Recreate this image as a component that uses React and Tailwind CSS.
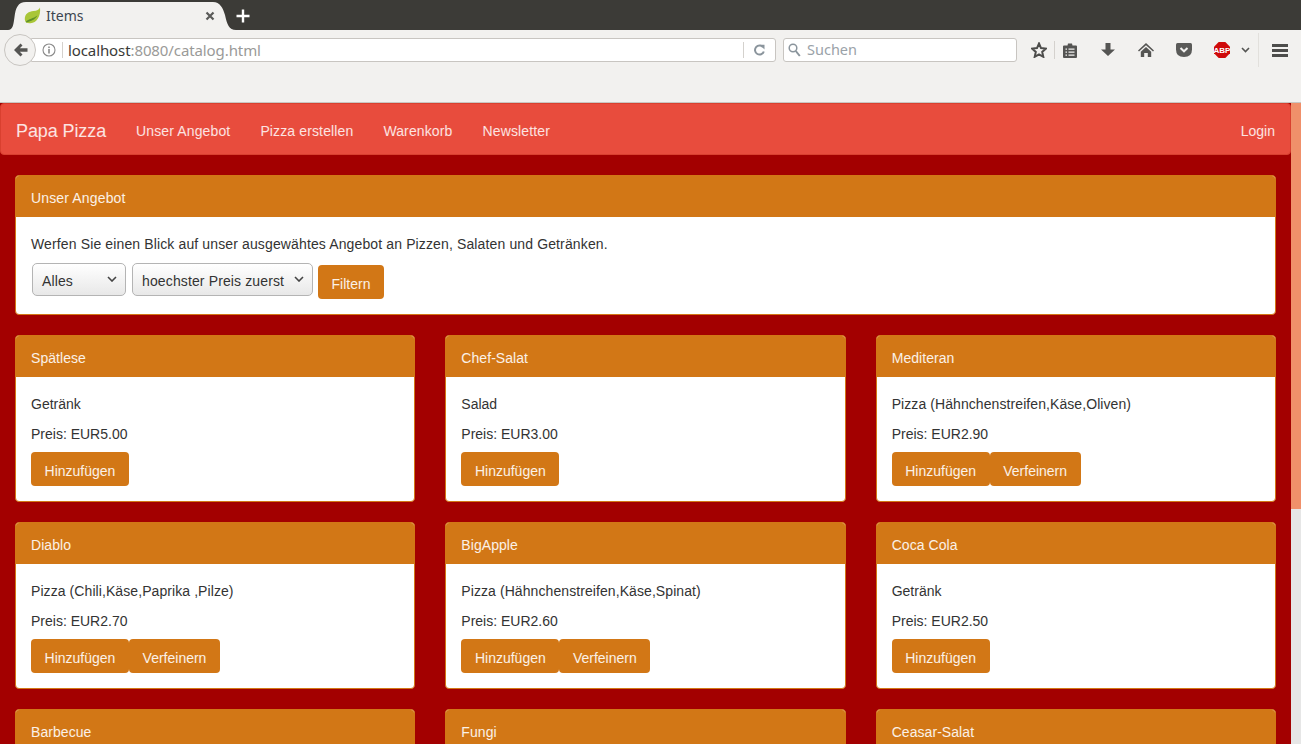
const items = [
  { name: "Spätlese", desc: "Getränk", price: "5.00" },
  { name: "Chef-Salat", desc: "Salad", price: "3.00" },
  { name: "Mediteran", desc: "Pizza (Hähnchenstreifen,Käse,Oliven)", price: "2.90", refine: true },
  { name: "Diablo", desc: "Pizza (Chili,Käse,Paprika ,Pilze)", price: "2.70", refine: true },
  { name: "BigApple", desc: "Pizza (Hähnchenstreifen,Käse,Spinat)", price: "2.60", refine: true },
  { name: "Coca Cola", desc: "Getränk", price: "2.50" },
  { name: "Barbecue", desc: "Pizza", price: "2.40", refine: true },
  { name: "Fungi", desc: "Pizza", price: "2.30", refine: true },
  { name: "Ceasar-Salat", desc: "Salad", price: "2.20" },
];

function Btn({ children, className = "" }) {
  return (
    <div className={"h-[34px] px-[13px] pt-[4px] flex items-center rounded-[4px] bg-[#d27716] text-[14px] text-white/90 " + className}>
      {children}
    </div>
  );
}

function Heading({ children, className = "" }) {
  return (
    <div className={"h-[41px] px-[15px] pt-[4px] flex items-center bg-[#d27716] text-white/90 rounded-t-[3px] " + className}>
      {children}
    </div>
  );
}

function Card({ item }) {
  return (
    <div className="h-[167px] bg-white border border-[#d27716] rounded-[4px] flex flex-col">
      <Heading className="tracking-[0.06px]">{item.name}</Heading>
      <div className="p-[15px] pr-[14px] flex flex-col">
        <div className={"h-[20px] leading-[24px] mb-[10px] " + (item.refine ? "tracking-[0.08px]" : "")}>{item.desc}</div>
        <div className="h-[20px] leading-[24px] mb-[10px]">Preis: EUR{item.price}</div>
        <div className="flex">
          <Btn className="w-[98px] justify-center">Hinzufügen</Btn>
          {item.refine && <Btn className="w-[91px] justify-center">Verfeinern</Btn>}
        </div>
      </div>
    </div>
  );
}

function Select({ label, className = "" }) {
  return (
    <div
      className={"h-[33px] rounded-[5px] border border-[#b4b4b4] bg-gradient-to-b from-white to-[#e8e8e8] flex items-center justify-between pl-[9px] pr-[8px] text-[#333] " + className}
    >
      <span className="pt-[4px] tracking-[0.13px]">{label}</span>
      <svg width="10" height="6" viewBox="0 0 10 6" className="-mt-[1px]">
        <path d="M1 1l4 4 4-4" fill="none" stroke="#444" strokeWidth="1.600" />
      </svg>
    </div>
  );
}

function Leaf() {
  return (
    <svg width="17" height="17" viewBox="0 0 17 17" className="shrink-0">
      <path d="M16 0.500C15 3 13 3.600 9.500 4C5 4.500 0.500 6.500 0.800 12.500C1 15.500 3.500 16.600 6.500 16.300C12.500 15.800 17 9.500 16 0.500Z" fill="#a9c638" />
      <path d="M1.600 15C5 11.500 9 11.800 13.500 8.500C11 13 6 14.300 2.500 15.600Z" fill="#5f9028" />
    </svg>
  );
}

function TabBar() {
  return (
    <div className="h-[30px] bg-[#3c3b37] flex items-start shrink-0">
      <div className="relative w-[228px] h-[30px] ml-[8px] flex items-center pl-[16px] pr-[19px] pt-[1px]">
        <svg width="228" height="30" viewBox="0 0 228 30" className="absolute left-0 top-0">
          <path d="M0 30C5 30 5.500 24 6.500 17C7.500 8 10 2 18 2L205 2C212 2 215 8 217 15C219 24 221 30 228 30Z" fill="#f2f1ef" />
        </svg>
        <div className="relative flex items-center w-full">
          <Leaf />
          <span className="ml-[5px] text-[14px] text-[#3c4650] font-['Noto_Sans',sans-serif] flex-1">Items</span>
          <svg width="10" height="10" viewBox="0 0 10 10" className="mr-[2px]">
            <path d="M1.500 1.500l7 7M8.500 1.500l-7 7" stroke="#5a5a58" strokeWidth="2.200" />
          </svg>
        </div>
      </div>
      <svg width="14" height="14" viewBox="0 0 14 14" className="mt-[9px]">
        <path d="M7 0.500v13M0.500 7h13" stroke="#fff" strokeWidth="2.400" />
      </svg>
    </div>
  );
}

function Sep({ className = "" }) {
  return <div className={"w-px shrink-0 bg-[#d4d1cd] " + className} />;
}

function Icon({ children, w = 16, h = 16, className = "" }) {
  return (
    <svg width={w} height={h} viewBox={`0 0 ${w} ${h}`} className={"shrink-0 " + className}>
      {children}
    </svg>
  );
}

function Toolbar() {
  return (
    <div className="h-[73px] bg-[#f2f1ef] border-b border-[#c9c6c2] shrink-0 text-[14.5px] font-['Noto_Sans',sans-serif]">
      <div className="h-[40px] flex items-center pl-[4px]">
        <div className="relative z-10 w-[32px] h-[32px] shrink-0 rounded-full border border-[#c8c5c1] bg-[#f2f1ef] flex items-center justify-center">
          <Icon w={15} h={14}>
            <path d="M7.500 0.500L1 7l6.500 6.500 2-2L6.800 8.700H14.500V5.300H6.800L9.500 2.500Z" fill="#555553" />
          </Icon>
        </div>
        <div className="-ml-[5px] w-[745px] h-[24px] shrink-0 bg-white border border-[#c8c5c1] rounded-r-[3px] flex items-center pl-[10px]">
          <Icon w={14} h={14}>
            <circle cx="7" cy="7" r="6" fill="none" stroke="#8a8a8a" strokeWidth="1.100" />
            <rect x="6.200" y="6" width="1.600" height="4.500" fill="#8a8a8a" />
            <rect x="6.200" y="3.500" width="1.600" height="1.600" fill="#8a8a8a" />
          </Icon>
          <Sep className="h-[16px] ml-[6px]" />
          <span className="ml-[5px] w-[675px] whitespace-nowrap text-[15px] tracking-[-0.1px]">
            <span className="text-[#3a3a38]">localhost</span>
            <span className="text-[#9a9a98]">:8080/catalog.html</span>
          </span>
          <Sep className="h-[16px]" />
          <Icon w={12} h={12} className="ml-[9px]">
            <path d="M10 3.200A4.500 4.500 0 1 0 10.800 7.500" fill="none" stroke="#8a949c" strokeWidth="2" />
            <path d="M6.800 0.800H11.500V5.500Z" fill="#8a949c" />
          </Icon>
        </div>
        <div className="ml-[7px] w-[234px] h-[24px] shrink-0 bg-white border border-[#c8c5c1] rounded-[3px] flex items-center pl-[4px]">
          <Icon w={13} h={14}>
            <circle cx="5" cy="5" r="3.800" fill="none" stroke="#8a949c" strokeWidth="1.500" />
            <path d="M7.800 8l4 5" stroke="#8a949c" strokeWidth="2" />
          </Icon>
          <span className="ml-[6px] text-[#9aa2a8]">Suchen</span>
        </div>
        <Icon w={16} h={16} className="ml-[14px]">
          <path d="M8 1.500l2 4.600 5 .5-3.800 3.300 1.100 4.900L8 12.300l-4.300 2.500 1.100-4.900L1 6.600l5-.5Z" fill="none" stroke="#4d4d4b" strokeWidth="2" />
        </Icon>
        <Sep className="h-[18px] ml-[7px]" />
        <Icon w={14} h={15} className="ml-[8px]">
          <path d="M1 2.500H4.500L5 .5H9L9.500 2.500H13Q14 2.500 14 3.500V14Q14 15 13 15H1Q0 15 0 14V3.500Q0 2.500 1 2.500Z" fill="#555553" />
          <path d="M2.500 5.500h1.500v1.300H2.500zM5.500 5.500h6v1.300h-6zM2.500 8.500h1.500v1.300H2.500zM5.500 8.500h6v1.300h-6zM2.500 11.500h1.500v1.300H2.500zM5.500 11.500h6v1.300h-6z" fill="#f2f1ef" />
        </Icon>
        <Icon w={14} h={13} className="ml-[24px] -mt-[1px]">
          <path d="M4.500 0H9.500V6.500H14L7 13 0 6.500H4.500Z" fill="#555553" />
        </Icon>
        <Icon w={16} h={14} className="ml-[23px]">
          <path d="M8 0L0 7.500 1 8.600 8 2.300 15 8.600 16 7.500Z M8 4L2.800 8.800V14H6.200V10H9.800V14H13.200V8.800Z" fill="#555553" />
        </Icon>
        <Icon w={16} h={14} className="ml-[22px]">
          <path d="M1.500 0H14.500Q16 0 16 1.500V6.500Q16 14 8 14T0 6.500V1.500Q0 0 1.500 0Z" fill="#5a5a58" />
          <path d="M4.500 5l3.500 3.300L11.500 5" fill="none" stroke="#f2f1ef" strokeWidth="2" />
        </Icon>
        <svg width="16" height="16" viewBox="0 0 16 16" className="ml-[22px] shrink-0">
          <path d="M4.700 0H11.300L16 4.700V11.300L11.300 16H4.700L0 11.300V4.700Z" fill="#cf0a0a" />
          <text x="8" y="11" textAnchor="middle" fontSize="8" fontWeight="700" fill="#fff" fontFamily="Liberation Sans, sans-serif">ABP</text>
        </svg>
        <Icon w={9} h={6} className="ml-[11px]">
          <path d="M1 1l3.500 3.500L8 1" fill="none" stroke="#555553" strokeWidth="1.600" />
        </Icon>
        <Sep className="h-[34px] ml-[8px] bg-[#e2e0dc]" />
        <Icon w={16} h={13} className="ml-[13px]">
          <path d="M0 0h16v3H0zM0 5h16v3H0zM0 10h16v3H0z" fill="#4d4d4b" />
        </Icon>
      </div>
    </div>
  );
}

export default function App() {
  return (
    <div className="w-[1301px] h-[744px] overflow-hidden flex flex-col bg-[#a30000] font-['Liberation_Sans',Arial,sans-serif] text-[14px] text-[#333]">
      <TabBar />
      <Toolbar />
      <div className="flex flex-1 min-h-0">
        <div className="flex-1 min-w-0 overflow-hidden">
          <nav className="h-[52px] pt-[4px] bg-[#e84c3d] border border-[#d9402f] rounded-[4px] flex items-center text-white/85">
            <span className="px-[15px] text-[18px] leading-[20px] tracking-[-0.1px]">Papa Pizza</span>
            <div className="flex gap-[30px] ml-[15px] flex-1 tracking-[0.13px]">
              <span>Unser Angebot</span>
              <span>Pizza erstellen</span>
              <span>Warenkorb</span>
              <span>Newsletter</span>
            </div>
            <span className="pr-[15px]">Login</span>
          </nav>
          <div className="px-[15px] pt-[20px]">
            <div className="h-[140px] bg-white border border-[#d27716] rounded-[4px] flex flex-col mb-[20px]">
              <Heading className="tracking-[0.15px]">Unser Angebot</Heading>
              <div className="pt-[15px] pl-[15px]">
                <div className="h-[20px] leading-[24px] mb-[11px] tracking-[0.13px]">
                  Werfen Sie einen Blick auf unser ausgewähtes Angebot an Pizzen, Salaten und Getränken.
                </div>
                <div className="flex items-start ml-[1px]">
                  <Select label="Alles" className="w-[94px]" />
                  <Select label="hoechster Preis zuerst" className="w-[181px] ml-[6px]" />
                  <Btn className="w-[66px] justify-center ml-[5px] mt-[2px]">Filtern</Btn>
                </div>
              </div>
            </div>
            <div className="grid grid-cols-3 gap-x-[30px] gap-y-[20px]">
              {items.map((it) => (
                <Card key={it.name} item={it} />
              ))}
            </div>
          </div>
        </div>
        <div className="w-[10px] shrink-0 bg-[#e6e6e6]">
          <div className="h-[406px] bg-[#f0906a]" />
        </div>
      </div>
    </div>
  );
}
